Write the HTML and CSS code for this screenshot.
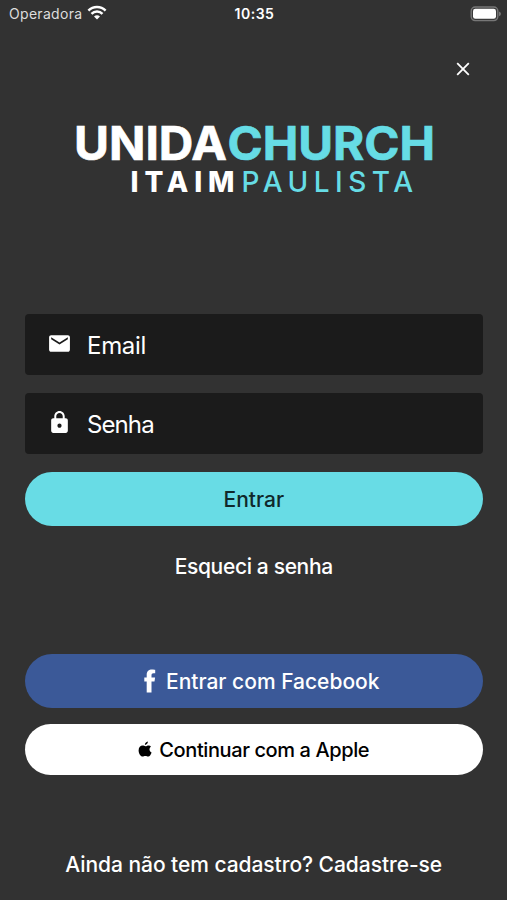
FILE: index.html
```html
<!DOCTYPE html>
<html lang="pt-BR">
    <head>
        <meta charset="UTF-8">
        <title>Unida Church Itaim Paulista</title>
        <link rel="stylesheet" href="styles.css">
    </head>
    <body>
        <header class="status">
            <div class="carrier">
                <span>Operadora</span>
                <svg width="20" height="15" viewBox="0 0 20 15" fill="none" stroke="#fff" stroke-width="2.5">
                    <path d="M1.400 5.600a12.200 12.200 0 0 1 17.200 0M4.500 8.800a7.800 7.800 0 0 1 11 0"/>
                    <path d="M10 14.600l-3-3a4.300 4.300 0 0 1 6 0z" fill="#fff" stroke="none"/>
                </svg>
            </div>
            <time>10:35</time>
            <svg class="battery" width="32" height="16" viewBox="0 0 32 16">
                <rect x="1.2" y="1" width="26.6" height="13.6" rx="4" fill="#3a3a3a" stroke="#777" stroke-width="1.4"/>
                <rect x="3" y="2.8" width="23" height="10" rx="2.4" fill="#fff"/>
                <path d="M29 5.400q2 .6 2 2.400t-2 2.400z" fill="#777"/>
            </svg>
        </header>
        <main>
            <button class="close" type="button" aria-label="Fechar">
                <svg width="14" height="14" viewBox="0 0 14 14" stroke="#fff" stroke-width="1.8">
                    <path d="M1.200 1.200l11.600 11.600M12.800 1.200L1.200 12.800"/>
                </svg>
            </button>
            <svg class="logo" width="370" height="92" viewBox="0 -8 370 92">
                <g font-size="46" font-weight="700" stroke-width=".7">
                    <text x="5" y="41" textLength="153" lengthAdjust="spacingAndGlyphs" fill="#fff" stroke="#fff">UNIDA</text>
                    <text x="158.5" y="41" textLength="207.5" lengthAdjust="spacingAndGlyphs" fill="#66dce5" stroke="#66dce5">CHURCH</text>
                </g>
                <g font-size="28">
                    <text x="61.5" y="73" textLength="104" font-weight="800" fill="#fff">ITAIM</text>
                    <text x="172.5" y="73" textLength="171.5" font-weight="500" fill="#66dce5">PAULISTA</text>
                </g>
            </svg>
            <form>
                <label class="field">
                    <svg width="25" height="25" viewBox="0 0 24 24" fill="#fff">
                        <path d="M20 4H4c-1.100 0-2 .9-2 2v12c0 1.100.9 2 2 2h16c1.100 0 2-.9 2-2V6c0-1.100-.9-2-2-2zm0 4l-8 5-8-5V6l8 5 8-5z"/>
                    </svg>
                    <span class="email">Email</span>
                </label>
                <label class="field">
                    <svg width="25" height="25" viewBox="0 0 24 24" fill="#fff">
                        <path d="M18 8h-1V6c0-2.760-2.240-5-5-5S7 3.240 7 6v2H6c-1.100 0-2 .9-2 2v10c0 1.100.9 2 2 2h12c1.100 0 2-.9 2-2V10c0-1.100-.9-2-2-2zm-6 9c-1.100 0-2-.9-2-2s.9-2 2-2 2 .9 2 2-.9 2-2 2zm3.100-9H8.900V6c0-1.710 1.390-3.100 3.100-3.100s3.100 1.390 3.100 3.100z"/>
                    </svg>
                    <span class="password">Senha</span>
                </label>
                <button class="login" type="button">Entrar</button>
            </form>
            <a class="forgot">Esqueci a senha</a>
            <button class="facebook" type="button">
                <svg width="12" height="24" viewBox="0 0 12 24" fill="#fff">
                    <path d="M2.700 23.500V12.500H.3V8.500H2.700V5.500C2.700 2.200 4.900.4 8 .4c1.500 0 3.200.3 3.200.3v3.600H9.500c-1.500 0-2 .8-2 1.900v2.300h3.600l-.6 4h-3v11z"/>
                </svg>
                <span>Entrar com Facebook</span>
            </button>
            <button class="apple" type="button">
                <svg width="14" height="17" viewBox="0 0 14 17">
                    <path d="M9.900.5c.1 1.700-1.300 3.300-3 3.400C6.700 2.300 8.200.7 9.900.5zM13 5.700c-2.200 1.400-1.900 4.700.6 5.700-.5 1.600-1.900 4.100-3.300 4.200-1.100.1-1.600-.6-2.900-.6s-1.800.6-2.900.6C2.700 15.600.6 12.400.6 9.500c0-3.100 1.900-4.900 4-4.900 1.200 0 2 .7 2.900.7.800 0 1.700-.8 3.100-.8 1.100.1 1.900.5 2.400 1.200z"/>
                </svg>
                <span>Continuar com a Apple</span>
            </button>
            <a class="register">Ainda não tem cadastro? Cadastre-se</a>
        </main>
    </body>
</html>
```

FILE: styles.css
```css
* {
    box-sizing: border-box;
}
body {
    margin: 0;
    height: 900px;
    overflow: hidden;
    background-color: #323232;
    color: #fff;
    font-family: Inter, "Liberation Sans", sans-serif;
}
svg {
    display: block;
    flex: none;
}
button {
    border: none;
    padding: 0;
    font-family: inherit;
}
.status {
    display: grid;
    grid-template-columns: 1fr auto 1fr;
    align-items: center;
    height: 27px;
    padding: 0 5px 0 9px;
    font-size: 14px;
}
.carrier {
    display: flex;
    align-items: center;
    gap: 5px;
    color: #ddd;
    letter-spacing: 0.3px;
}
.carrier svg {
    margin-top: -3px;
}
.status time {
    margin-right: 2px;
    font-weight: 600;
    letter-spacing: 0.5px;
}
.battery {
    justify-self: end;
}
main {
    display: flex;
    flex-direction: column;
    padding: 35px 24.5px 0 25px;
}
.close {
    align-self: flex-end;
    margin-right: 13px;
    background: none;
}
.logo {
    align-self: center;
    margin-top: 35px;
}
form {
    display: grid;
    gap: 18px;
    margin-top: 111px;
}
.field {
    display: flex;
    align-items: center;
    gap: 15px;
    height: 61px;
    padding-left: 22px;
    border-radius: 4px;
    background-color: #1b1b1b;
    font-size: 24px;
}
.field svg {
    margin-top: -3px;
}
.field span {
    padding-top: 1px;
}
.email {
    letter-spacing: -0.3px;
}
.password {
    letter-spacing: -0.9px;
}
.login,
.facebook,
.apple {
    display: flex;
    align-items: center;
    justify-content: center;
    height: 54px;
    border-radius: 27px;
    font-size: 21px;
    font-weight: 500;
}
.login {
    padding-top: 1px;
    background-color: #68dce5;
    color: #10282b;
}
.forgot {
    margin-top: 28px;
    text-align: center;
    font-size: 21px;
    font-weight: 500;
    letter-spacing: -0.35px;
    line-height: 26px;
}
.facebook {
    gap: 10px;
    margin-top: 74px;
    padding-left: 16px;
    background-color: #3b5998;
    color: #fff;
}
.facebook span {
    padding-top: 1px;
}
.apple {
    gap: 7px;
    height: 51px;
    margin-top: 16px;
    background-color: #fff;
    color: #000;
    font-size: 20px;
    letter-spacing: -0.4px;
}
.register {
    margin-top: 76px;
    text-align: center;
    font-size: 21px;
    font-weight: 500;
    letter-spacing: -0.05px;
    line-height: 27px;
    white-space: nowrap;
}
```
